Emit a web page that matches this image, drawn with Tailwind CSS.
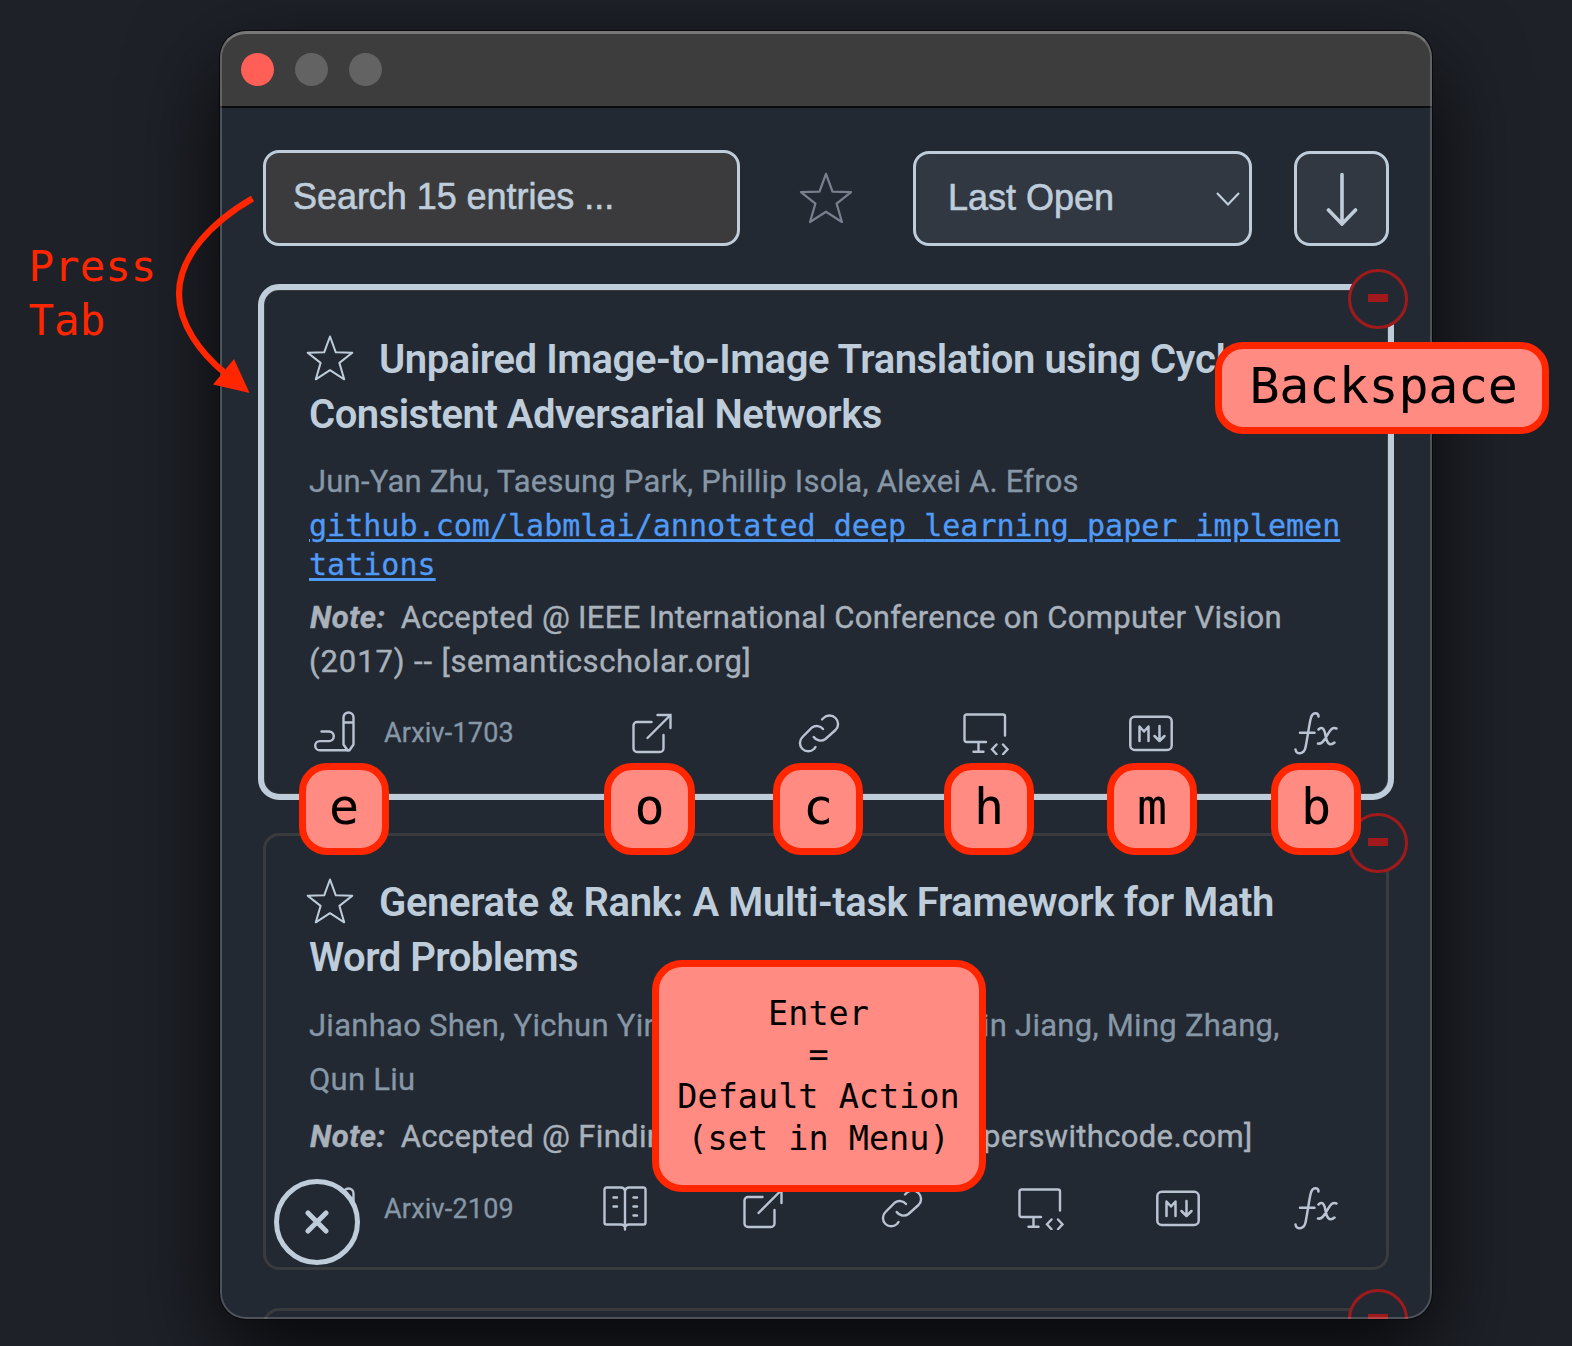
<!DOCTYPE html>
<html lang="en">
<head>
<meta charset="utf-8">
<title>Entries</title>
<script src="https://cdn.jsdelivr.net/npm/@tailwindcss/browser@4"></script>
</head>
<body class="relative h-[1346px] w-[1572px] overflow-hidden bg-[#1e2128] pt-[31px] pl-[220px] font-[Roboto,sans-serif]">

<!-- Icon set -->
<svg class="hidden">
  <defs>
    <symbol id="star" viewBox="0 0 48 48"><path d="M24 2.5 29.8 18.3 46.3 18.7 33.4 28.9 38.2 45.3 24 36.2 9.8 45.3 14.6 28.9 1.7 18.7 18.2 18.3Z" fill="none" stroke="currentColor" stroke-width="2" stroke-linejoin="round"/></symbol>
    <symbol id="edit" viewBox="0 0 44 44"><g fill="none" stroke="currentColor" stroke-width="2.4" stroke-linecap="round" stroke-linejoin="round"><path d="M31.5 6.5a5 5 0 0 1 10 0V33.5L37.5 39.3H35.5L31.5 33.5ZM31.5 11.5h10"/><path d="M9.500 20.500H17a4.800 4.800 0 0 1 0 9.600H7.800a4.600 4.600 0 0 0 0 9.200H36.500"/></g></symbol>
    <symbol id="open" viewBox="0 0 44 44"><path d="M21.500 11H7a3.500 3.500 0 0 0-3.500 3.500v23A3.500 3.500 0 0 0 7 41h23a3.500 3.500 0 0 0 3.500-3.500V24M17.500 27 40 4.500M27.500 4H40.500V17" fill="none" stroke="currentColor" stroke-width="2.400" stroke-linecap="round"/></symbol>
    <symbol id="link" viewBox="0 0 44 44"><path d="M26 8.500 27.500 7a8.300 8.300 0 0 1 12 0 8.300 8.300 0 0 1 0 12L29.500 28a8.300 8.300 0 0 1-11.800-2M27 18a8.300 8.300 0 0 0-11-1.500L6.500 26a8.300 8.300 0 0 0 0 12 8.300 8.300 0 0 0 11.500 0L19.500 36" fill="none" stroke="currentColor" stroke-width="2.400" stroke-linecap="round"/></symbol>
    <symbol id="site" viewBox="0 0 46 44"><path d="M23 31H3.500A2 2 0 0 1 1.500 29V5.500A2 2 0 0 1 3.500 3.500H40A2 2 0 0 1 42 5.500V24.500M15.500 31v9.500M10.500 40.800h10M33.500 33.500 29 38.300l4.500 4.900M40 33.500l4.500 4.800L40 43.200" fill="none" stroke="currentColor" stroke-width="2.400" stroke-linecap="round"/></symbol>
    <symbol id="md" viewBox="0 0 44 44"><g fill="none" stroke="currentColor" stroke-width="2.500" stroke-linecap="round" stroke-linejoin="round"><rect x="1.300" y="5.700" width="41.400" height="33.200" rx="4.500"/><path d="M10.500 30V15.500l4.500 5 4.500-5V30M30.500 15v14.500M25.500 25l5 5 5-5"/></g></symbol>
    <symbol id="fx" viewBox="0 0 44 44"><path d="M24.500 5.500c0-4-5.500-5-7.500 1-2 7-3 18-5.500 30C10 43.500 2 44 1.500 38.500M6 21.800H20.500M24.500 18.500c4-4 6 0 7 6s3.500 12 9 7M42.500 17.500c-5-2-7 3-9.500 7s-4.500 9-9 8" fill="none" stroke="currentColor" stroke-width="2.500" stroke-linecap="round"/></symbol>
    <symbol id="book" viewBox="0 0 44 46"><path d="M22 4.500Q21 1.500 18 1.500H3.500a2 2 0 0 0-2 2V36.500a2 2 0 0 0 2 2H18Q21 38.500 22 41 23 38.500 26 38.500H40.500a2 2 0 0 0 2-2V3.500a2 2 0 0 0-2-2H26Q23 1.500 22 4.500V43.500M10.500 11.500h3.500M10.500 20.500h3.500M30.500 11.500h3.500M30.500 20.500h3.500M30.500 29.500h3.500" fill="none" stroke="currentColor" stroke-width="2.400" stroke-linecap="round"/></symbol>
  </defs>
</svg>

<!-- Window -->
<main class="relative h-[1288px] w-[1212px] overflow-hidden rounded-[26px] bg-[#222933] shadow-[0_0_0_1px_#08090b,0_34px_90px_rgba(0,0,0,.8)]">
  <header class="flex h-[77px] items-center gap-[21px] border-b-2 border-[#0b0c0e] bg-[#3d3d3d] pt-px pl-[21px]">
    <span class="size-[33px] rounded-full bg-[#ff5f57]"></span>
    <span class="size-[33px] rounded-full bg-[#636363]"></span>
    <span class="size-[33px] rounded-full bg-[#636363]"></span>
  </header>

  <div class="pt-[42px] pl-[43px] text-[#bfcddb]">
    <!-- Filter bar -->
    <div class="flex w-[1126px] items-center font-['Liberation_Sans',sans-serif] text-[36px] [-webkit-text-stroke:0.6px]">
      <div class="flex h-[96px] w-[477px] items-center rounded-[16px] border-[3px] border-current bg-[#3b3b3d] pb-[3px] pl-[27px] tracking-[-0.05px]">Search 15 entries ...</div>
      <svg class="ml-[59px] h-[54px] w-[54px] text-[#797f8d]"><use href="#star"/></svg>
      <div class="mt-px ml-[60px] flex h-[95px] w-[339px] items-center justify-between rounded-[16px] border-[3px] border-current bg-[#313842] pr-[8px] pl-[32px]"><span class="-mt-[2px]">Last Open</span>
        <svg class="h-[16px] w-[26px]" viewBox="0 0 26 16"><path d="M2 2 13 13.500 24 2" fill="none" stroke="currentColor" stroke-width="2.200"/></svg>
      </div>
      <div class="mt-px ml-[42px] flex h-[95px] w-[95px] items-center justify-center rounded-[16px] border-[3px] border-current bg-[#313842]">
        <svg class="h-[54px] w-[36px]" viewBox="0 0 36 54"><path d="M18 2.500V51M4.500 38 18 52 31.500 38" fill="none" stroke="currentColor" stroke-width="3.600" stroke-linecap="round"/></svg>
      </div>
    </div>

    <!-- Entries -->
    <div class="mt-[43px] flex w-[1126px] flex-col gap-[38px]">
      <article class="relative h-[506px] rounded-[16px] border-2 border-[#3b3c40] px-[44px] pt-[41px] outline-[6px] -outline-offset-1 outline-[#bfcddb]">
        <h2 class="text-[40px] leading-[55px] font-semibold tracking-[-0.43px] whitespace-nowrap"><svg class="mr-[25px] ml-[-3px] inline-block h-[48px] w-[48px] align-[-9px]"><use href="#star"/></svg>Unpaired Image-to-Image Translation using Cycle-<br><span class="tracking-[-0.5px]">Consistent Adversarial Networks</span></h2>
        <p class="mt-[13px] text-[31px] leading-[54px] tracking-[0.21px] whitespace-nowrap text-[#8797a6] [-webkit-text-stroke:0.3px]">Jun-Yan Zhu, Taesung Park, Phillip Isola, Alexei A. Efros</p>
        <p class="-mt-[3px] font-['DejaVu_Sans_Mono',monospace] text-[30px] leading-[39px] tracking-[0.03px] whitespace-nowrap text-[#509af8] underline decoration-[#509af8] decoration-[2.500px] underline-offset-[3px] [-webkit-text-stroke:0.3px]">github.com/labmlai/annotated<span class="text-transparent [text-decoration-skip-ink:none] [-webkit-text-stroke:0px]">_</span>deep<span class="text-transparent [text-decoration-skip-ink:none] [-webkit-text-stroke:0px]">_</span>learning<span class="text-transparent [text-decoration-skip-ink:none] [-webkit-text-stroke:0px]">_</span>paper<span class="text-transparent [text-decoration-skip-ink:none] [-webkit-text-stroke:0px]">_</span>implemen<br>tations</p>
        <p class="mt-[12px] text-[31px] leading-[44.300px] tracking-[0.32px] whitespace-nowrap text-[#a9b1bb] [-webkit-text-stroke:0.4px]"><b class="mr-[15px] ml-px tracking-[0.5px] italic">Note:</b>Accepted @ IEEE International Conference on Computer Vision<br><span class="tracking-[0.9px]">(2017) -- </span><span class="tracking-[0.58px]">[semanticscholar.org]</span></p>
        <div class="mt-[26px] flex h-[44px] items-center text-[#b9c3d2]">
          <svg class="ml-[3px] size-[44px]"><use href="#edit"/></svg>
          <span class="ml-[28px] w-[246px] pt-px text-[27px] tracking-[0.2px] text-[#8797a6] [-webkit-text-stroke:0.3px]">Arxiv-1703</span>
          <div class="flex w-[708px] shrink-0 justify-between">
            <svg class="size-[44px]"><use href="#open"/></svg>
            <svg class="size-[44px]"><use href="#link"/></svg>
            <svg class="-mr-[2px] ml-[2px] h-[44px] w-[46px]"><use href="#site"/></svg>
            <svg class="size-[44px]"><use href="#md"/></svg>
            <svg class="size-[44px]"><use href="#fx"/></svg>
          </div>
        </div>
        <span class="absolute -top-[22px] -right-[21px] flex size-[60px] items-center justify-center rounded-full border-[3px] border-[#a01a1b] bg-[#222933] pb-[3px]"><i class="h-[8px] w-[20px] bg-[#a01a1b]"></i></span>
      </article>

      <article class="relative h-[437px] rounded-[16px] border-[3px] border-[#3a3b3e] px-[43px] pt-[39px]">
        <h2 class="text-[40px] leading-[55px] font-semibold tracking-[-0.38px] whitespace-nowrap"><svg class="mr-[25px] ml-[-3px] inline-block h-[48px] w-[48px] align-[-9px]"><use href="#star"/></svg>Generate &amp; Rank: A Multi-task Framework for Math<br><span class="tracking-[-0.5px]">Word Problems</span></h2>
        <p class="mt-[14px] text-[31px] leading-[54px] tracking-[0.27px] whitespace-nowrap text-[#8797a6] [-webkit-text-stroke:0.3px]">Jianhao Shen, Yichun Yin, Lin Li, Lifeng Shang, Xin Jiang, Ming Zhang,<br>Qun Liu</p>
        <p class="mt-[8px] text-[31px] leading-[44.300px] tracking-[0.34px] whitespace-nowrap text-[#a9b1bb] [-webkit-text-stroke:0.4px]"><b class="mr-[15px] ml-px tracking-[0.5px] italic">Note:</b>Accepted @ Findings <span class="tracking-[-0.1px]">EMNLP (2021) --</span> [paperswithcode.com]</p>
        <div class="mt-[28px] flex h-[44px] items-center text-[#b9c3d2]">
          <svg class="ml-[3px] size-[44px]"><use href="#edit"/></svg>
          <span class="ml-[28px] w-[219px] text-[27px] tracking-[0.2px] text-[#8797a6] [-webkit-text-stroke:0.3px]">Arxiv-2109</span>
          <div class="flex w-[735px] shrink-0 justify-between">
            <svg class="h-[46px] w-[44px]"><use href="#book"/></svg>
            <svg class="size-[44px]"><use href="#open"/></svg>
            <svg class="size-[44px]"><use href="#link"/></svg>
            <svg class="-mr-[2px] ml-[2px] h-[44px] w-[46px]"><use href="#site"/></svg>
            <svg class="size-[44px]"><use href="#md"/></svg>
            <svg class="size-[44px]"><use href="#fx"/></svg>
          </div>
        </div>
        <span class="absolute -top-[23px] -right-[22px] flex size-[60px] items-center justify-center rounded-full border-[3px] border-[#a01a1b] bg-[#222933] pb-[3px]"><i class="h-[8px] w-[20px] bg-[#a01a1b]"></i></span>
      </article>

      <article class="relative h-[200px] rounded-[16px] border-[3px] border-[#3a3b3e]">
        <span class="absolute -top-[22px] -right-[22px] flex size-[60px] items-center justify-center rounded-full border-[3px] border-[#a01a1b] bg-[#222933] pb-[3px]"><i class="h-[8px] w-[20px] bg-[#a01a1b]"></i></span>
      </article>
    </div>
  </div>

  <!-- Floating close button -->
  <div class="absolute top-[1148px] left-[54px] flex size-[86px] items-center justify-center rounded-full border-[5px] border-[#bfcddb] bg-[#222933] text-[#bfcddb]">
    <svg class="size-[24px]" viewBox="0 0 24 24"><path d="M3 3 21 21M21 3 3 21" stroke="currentColor" stroke-width="5" stroke-linecap="round"/></svg>
  </div>
  <!-- Glass edge -->
  <div class="absolute inset-0 rounded-[26px] border-2 border-t-[3px] border-white/20 border-t-white/30"></div>
</main>

<!-- Annotations -->
<p class="absolute top-[240px] left-[28.500px] font-['DejaVu_Sans_Mono',monospace] text-[42.500px] leading-[54px] text-[#ff2600]">Press<br>Tab</p>
<svg class="absolute top-[190px] left-[165px] h-[210px] w-[95px]" viewBox="165 190 95 210">
  <path d="M252.500 198.500C212 222 179 256 179 294 179 324 200 353 226 374" fill="none" stroke="#ff2600" stroke-width="6.200"/>
  <path d="M249.500 393 234 359 213 384.500Z" fill="#ff2600"/>
</svg>

<div class="font-['DejaVu_Sans_Mono',monospace] text-[50px] leading-[74px] text-black">
  <kbd class="absolute top-[342px] left-[1215px] h-[92px] w-[334px] rounded-[28px] border-[7px] border-[#ff2600] bg-[#ff8b82] pl-[3px] text-center font-[inherit] tracking-[-0.3px]">Backspace</kbd>
  <kbd class="absolute top-[763px] left-[299px] h-[92px] w-[90px] rounded-[28px] border-[7px] border-[#ff2600] bg-[#ff8b82] text-center font-[inherit]">e</kbd>
  <kbd class="absolute top-[763px] left-[604px] h-[92px] w-[91px] rounded-[28px] border-[7px] border-[#ff2600] bg-[#ff8b82] text-center font-[inherit]">o</kbd>
  <kbd class="absolute top-[763px] left-[773px] h-[92px] w-[90px] rounded-[28px] border-[7px] border-[#ff2600] bg-[#ff8b82] text-center font-[inherit]">c</kbd>
  <kbd class="absolute top-[763px] left-[944px] h-[92px] w-[90px] rounded-[28px] border-[7px] border-[#ff2600] bg-[#ff8b82] text-center font-[inherit]">h</kbd>
  <kbd class="absolute top-[763px] left-[1107px] h-[92px] w-[90px] rounded-[28px] border-[7px] border-[#ff2600] bg-[#ff8b82] text-center font-[inherit]">m</kbd>
  <kbd class="absolute top-[763px] left-[1271px] h-[92px] w-[90px] rounded-[28px] border-[7px] border-[#ff2600] bg-[#ff8b82] text-center font-[inherit]">b</kbd>
</div>
<div class="absolute top-[960px] left-[652px] flex h-[232px] w-[334px] items-center justify-center rounded-[30px] border-[7px] border-[#ff2600] bg-[#ff8b82] pr-px text-center font-['DejaVu_Sans_Mono',monospace] text-[33.500px] leading-[41.700px] whitespace-nowrap text-black">Enter<br>=<br>Default Action<br>(set in Menu)</div>
</body>
</html>
